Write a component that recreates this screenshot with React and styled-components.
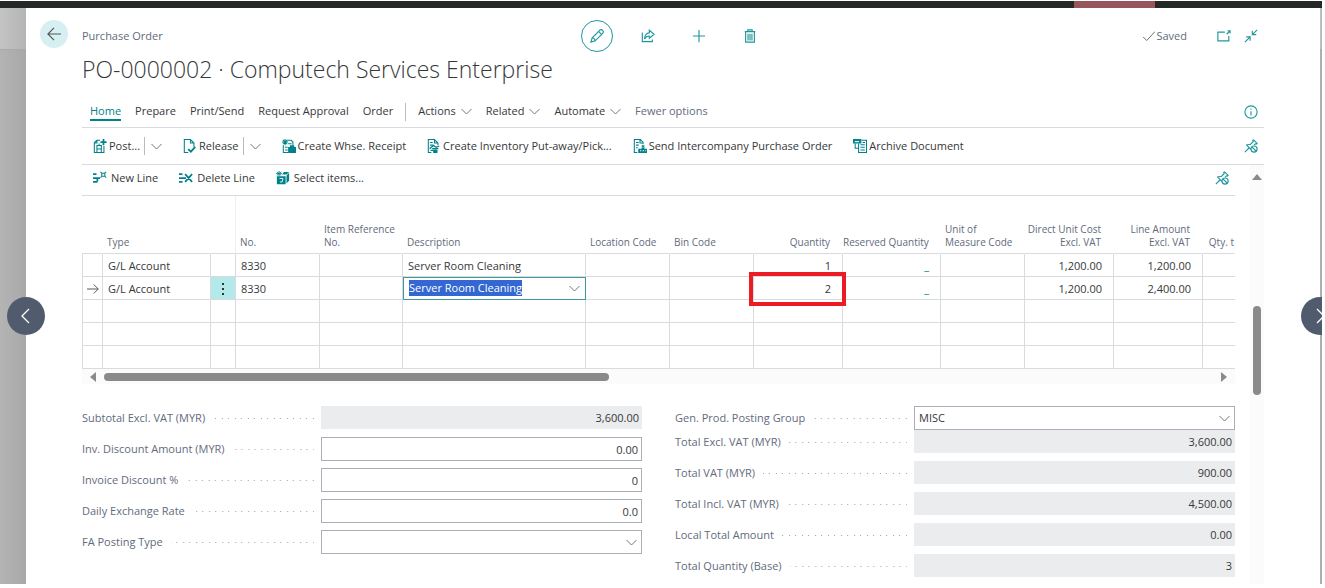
import React, { useEffect, useRef } from "react";
import styled, { createGlobalStyle } from "styled-components";

const teal = "#00828a";
const tealLight = "#1f979e";
const ink = "#363839";
const muted = "#626b7c";
const line = "#d9dbdf";

const GlobalStyle = createGlobalStyle`
  * {
    box-sizing: border-box;
  }
  body {
    margin: 0;
    background: #fff;
    color: ${ink};
    font-family: "Open Sans", "Noto Sans", sans-serif;
    font-size: 11px;
    line-height: 16px;
  }
  button, input, select {
    font: inherit;
    color: inherit;
  }
  button {
    padding: 0;
    border: 0;
    background: none;
    cursor: pointer;
  }
  svg {
    display: block;
    flex: none;
  }
`;

// 전체 화면
const Screen = styled.div`
  display: flex;
  flex-direction: column;
  height: 100vh;
  padding: 1px 3px 4px 0;
  overflow: hidden;
`;

const TopBar = styled.div`
  display: flex;
  justify-content: flex-end;
  flex: none;
  height: 7px;
  padding-right: 167px;
  background: #262827;
`;

const TopBadge = styled.div`
  width: 81px;
  background: #97565b;
`;

const Stage = styled.div`
  position: relative;
  display: flex;
  flex: 1;
  min-height: 0;
  overflow: hidden;
`;

const Gutter = styled.div`
  flex: none;
  width: ${({ $width }) => $width}px;
  padding-top: 41px;
  background: linear-gradient(90deg, #c4c4c4, #b4b4b4);
`;

const GutterShade = styled.div`
  height: 100%;
  border-top: 1px solid #a9a9a9;
  background: linear-gradient(90deg, #b4b4b4, #a8a8a8);
`;

const Panel = styled.main`
  display: grid;
  grid-template-columns: 56px minmax(0, 1fr) 56px;
  flex: 1;
  min-width: 0;
  background: #fff;
`;

const PanelSide = styled.div`
  padding: 12px 0 0 14px;
`;

const Content = styled.div`
  display: flex;
  flex-direction: column;
  min-height: 0;
`;

const BackButton = styled.button`
  display: grid;
  place-items: center;
  width: 28px;
  height: 28px;
  border-radius: 50%;
  background: #d6eff1;
`;

const PageArrow = styled.button`
  position: absolute;
  top: 289px;
  ${({ $side }) => $side}: ${({ $side }) => ($side === "left" ? 7 : -17)}px;
  display: grid;
  place-items: center;
  width: 38px;
  height: 38px;
  border-radius: 50%;
  background: #505c6d;
  color: #fff;
`;

// 제목 영역
const Header = styled.header`
  display: grid;
  grid-template-columns: 1fr auto 1fr;
  align-items: center;
  padding-top: 12px;
`;

const Caption = styled.span`
  color: ${muted};
`;

const HeaderActions = styled.div`
  display: flex;
  gap: 19px;
`;

const RoundButton = styled.button`
  display: grid;
  place-items: center;
  width: 32px;
  height: 32px;
  border: 1px solid ${({ $active }) => ($active ? tealLight : "transparent")};
  border-radius: 50%;
  color: ${tealLight};
`;

const HeaderStatus = styled.div`
  display: flex;
  justify-content: flex-end;
  align-items: center;
  gap: 13px;
  padding-right: 6px;
  color: ${tealLight};
`;

const Saved = styled.span`
  display: flex;
  align-items: center;
  gap: 1px;
  margin-right: 17px;
  color: ${muted};
`;

const Title = styled.h1`
  margin: 0;
  padding-top: 1px;
  font-size: 23px;
  font-weight: 300;
  line-height: 32px;
`;

// 메뉴 탭
const Tabs = styled.nav`
  display: flex;
  align-items: center;
  height: 43px;
  padding: 12px 6px 0 8px;
  border-bottom: 1px solid ${line};
`;

const TabGroup = styled.div`
  display: flex;
  gap: 14px;
`;

const Tab = styled.button`
  display: flex;
  align-items: center;
  gap: 5px;
  height: 18px;
  border-bottom: 2px solid ${({ $active }) => ($active ? teal : "transparent")};
  color: ${({ $active, $quiet }) => ($active ? teal : $quiet ? muted : ink)};
`;

const Divider = styled.span`
  width: 1px;
  height: 18px;
  margin: 0 ${({ $after }) => $after}px 0 ${({ $before }) => $before}px;
  background: #b9bcc1;
`;

const Spacer = styled.span`
  flex: 1;
`;

const IconButton = styled.button`
  color: ${tealLight};
`;

const Toolbar = styled.div`
  display: flex;
  align-items: center;
  gap: 21px;
  height: ${({ $height }) => $height}px;
  padding: 0 6px ${({ $lift }) => $lift || 0}px 11px;
  border-bottom: 1px solid ${line};
`;

const Split = styled.div`
  display: flex;
  align-items: center;
`;

const Command = styled.button`
  display: flex;
  align-items: center;
  gap: ${({ $gap }) => $gap || 2}px;
  white-space: nowrap;

  svg {
    color: ${teal};
  }
`;

const MoreButton = styled.button`
  color: #777;
`;

// 스크롤 영역
const Body = styled.div`
  display: grid;
  grid-template-columns: minmax(0, 1fr) 14px;
  column-gap: 15px;
  flex: 1;
  min-height: 0;
`;

const BodyMain = styled.div`
  min-width: 0;
`;

const ScrollColumn = styled.div`
  display: flex;
  flex-direction: column;
  align-items: center;
  padding-top: 9px;
  background: #fbfbfb;
`;

const ScrollThumb = styled.div`
  width: 8px;
  height: 89px;
  margin-top: 126px;
  border-radius: 4px;
  background: #8a8a8a;
`;

const ScrollRow = styled.div`
  display: flex;
  align-items: center;
  gap: 8px;
  height: 15px;
  padding: 0 8px;
  background: #fbfbfb;
`;

const ScrollTrack = styled.div`
  flex: 1;
`;

const RowThumb = styled.div`
  height: 8px;
  border-radius: 4px;
  background: #8a8a8a;
`;

const GridScroll = styled.div`
  overflow: hidden;
`;

const Lines = styled.table`
  width: 100%;
  table-layout: fixed;
  border-spacing: 0;
`;

const HeadCell = styled.th`
  height: 58px;
  padding: 0 ${({ $end, $last }) => ($last ? 0 : $end ? 12 : 4)}px 4px ${({ $end }) => ($end ? 0 : 4)}px;
  border-right: 1px solid ${({ $split }) => ($split ? "#eeeff1" : "transparent")};
  border-bottom: 1px solid ${line};
  color: ${muted};
  font-size: 10px;
  font-weight: 400;
  line-height: 13px;
  text-align: ${({ $end }) => ($end ? "right" : "left")};
  vertical-align: bottom;
  white-space: pre;
`;

const Cell = styled.td`
  position: relative;
  height: 23px;
  padding: 1px ${({ $end }) => ($end ? 11 : 0)}px 0 ${({ $end, $flush }) => ($end || $flush ? 0 : 5)}px;
  border-right: 1px solid ${line};
  border-bottom: 1px solid ${line};
  background: ${({ $marked }) => ($marked ? "#b2e9eb" : "none")};
  text-align: ${({ $end }) => ($end ? "right" : "left")};
  white-space: nowrap;

  &:first-child {
    border-left: 1px solid ${line};
  }
  &:last-child {
    border-right: 0;
  }
`;

const Reserved = styled.a`
  color: ${teal};
  text-decoration: none;
`;

const RowMark = styled.span`
  display: grid;
  place-items: center;
  color: #555;
`;

const RowMenu = styled.button`
  display: grid;
  place-items: center;
  width: 100%;
  color: #333;
`;

const Highlight = styled.span`
  position: absolute;
  inset: -5px -4px -7px -5px;
  z-index: 1;
  border: 4px solid #ed1c24;
  pointer-events: none;
`;

const Combo = styled.div`
  display: flex;
  align-items: center;
  height: 23px;
  margin: -2px -1px -1px 0;
  padding: 0 5px 0 5px;
  border: 1px solid #3c999c;
  background: #fff;

  input {
    flex: 1;
    min-width: 0;
    padding: 0;
    border: 0;
    outline: 0;
    background: none;
  }
  input::selection {
    background: #3367d1;
    color: #fff;
  }
`;

// 합계 영역
const Totals = styled.div`
  display: grid;
  grid-template-columns: 1fr 1fr;
  column-gap: 33px;
  padding-top: 22px;
`;

const Fields = styled.div`
  display: flex;
  flex-direction: column;
`;

const Field = styled.div`
  display: grid;
  grid-template-columns: 239px minmax(0, 1fr);
  align-items: center;
  margin-bottom: ${({ $tight }) => ($tight ? 0 : 7)}px;
`;

const Label = styled.label`
  display: flex;
  align-items: center;
  gap: 8px;
  padding-right: 7px;
  color: ${muted};
  white-space: nowrap;

  &::after {
    content: "";
    flex: 1;
    height: 1px;
    background: linear-gradient(
      90deg,
      transparent 5px,
      #9da1a8 5px,
      #9da1a8 6px,
      transparent 6px,
      transparent 12px,
      #9da1a8 12px
    ) right top / 13px 1px;
  }
`;

const Value = styled.input`
  width: 100%;
  height: 24px;
  padding: 0 3px;
  border: 1px solid ${({ readOnly }) => (readOnly ? "#fff" : "#a9aeb8")};
  border-width: ${({ readOnly }) => (readOnly ? "0 0 1px" : "1px")};
  outline: 0;
  background: ${({ readOnly }) => (readOnly ? "#ebecee" : "#fff")};
  text-align: right;
`;

const SelectBox = styled.div`
  display: grid;
  align-items: center;

  select,
  svg {
    grid-area: 1 / 1;
  }
  select {
    width: 100%;
    height: 24px;
    padding: 0 4px;
    border: 1px solid #a9aeb8;
    border-radius: 0;
    outline: 0;
    background: #fff;
    appearance: none;
  }
  svg {
    justify-self: end;
    margin-right: 5px;
    color: #777;
    pointer-events: none;
  }
`;

const Svg = ({ size = 16, width = 1, children }) => (
  <svg
    width={size}
    height={size}
    viewBox="0 0 16 16"
    fill="none"
    stroke="currentColor"
    strokeWidth={width}
    aria-hidden="true"
  >
    {children}
  </svg>
);

const Chevron = () => (
  <svg width="11" height="11" viewBox="0 0 11 11" fill="none" stroke="#777" aria-hidden="true">
    <path d="M.5 3l5 5 5-5" />
  </svg>
);

const PinIcon = () => (
  <Svg size={14} width={1.3}>
    <path d="M1 15l5-5M2.500 6.500l4 4M3 7c2-1 3-.5 4.500-1l3-3-.5-1.500L11 1l4 4-1 .8-1-.3-1.500 1.500M6.500 10.500L8 12" />
    <circle cx="11.500" cy="11.500" r="3.500" />
    <path d="M9 9l5 5" />
  </Svg>
);

const PostIcon = () => (
  <Svg size={14} width={1.2}>
    <path d="M8 1.500H4.500L1.500 4v11.400h11V8M1.500 4.500h3v-3M4.500 15V7.500h5V15M4.500 11.500h5M7 5v2.500" />
    <path d="M12 0v7M8.500 3.500h7" strokeWidth="2" />
  </Svg>
);

const ReleaseIcon = () => (
  <Svg size={14} width={1.2}>
    <path d="M6 15.400H1.500V.6h7l4 4V9M8.500.6v4h4" />
    <path d="M6 11.500l3 3L14 9" strokeWidth="2" />
  </Svg>
);

const WarehouseIcon = () => (
  <Svg size={14} width={1.2}>
    <path d="M1.500 7v8.400H7M6 1.500h4.500l2 2V7M3.500 9.500h3M3.500 12.500h3M7 5.500h4" />
    <path d="M3.500 0v7M0 3.500h7M1 1l5 5M6 1L1 6" />
    <path d="M7 9h9v7H7zM9 7h5v2H9z" fill="currentColor" stroke="none" />
  </Svg>
);

const InventoryIcon = () => (
  <Svg size={14} width={1.2}>
    <path d="M5 15.400H1.500V.6h7l4 4V7M8.500.6v4h4M3.500 4h3M3.500 7h4" />
    <path d="M3 11l4.500-3.500 3 2L14 8M6 11h7M4 13h3" strokeWidth="1.500" />
    <path d="M7 12h5v4H7z" fill="currentColor" stroke="none" />
  </Svg>
);

const SendIcon = () => (
  <Svg size={14} width={1.2}>
    <path d="M5 15.400H1.500V.6h7l3 3V6M8 .6v4h4M3.500 4h3M3.500 7h3M3.500 10h2" />
    <path d="M6 16v-5h4V7h3v4h3v5z" fill="currentColor" stroke="none" />
    <path d="M8 13.500h1.500M11 13.500h1.500M14 13.500h1M11 9.500h1" stroke="#fff" />
  </Svg>
);

const ArchiveIcon = () => (
  <Svg size={14} width={1.2}>
    <path d="M0 .5h9v4H0z" fill="currentColor" />
    <path d="M2 3h5" stroke="#fff" />
    <path d="M2.500 5v5.500H6M10 1.500h5.400v14h-9V5M8.500 6.500h5M8.500 9.500h5M8.500 12.500h5M11 4h3" />
  </Svg>
);

const NewLineIcon = () => (
  <Svg size={14}>
    <path d="M0 3.500h4M0 8h8M0 12.500h5M5 8v4" strokeWidth="2" />
    <path d="M10 2.500h3.500v3.500H10zM8.500 1L10 2.500M15 1l-1.500 1.500M8.500 7.500L10 6M15 7.500L13.500 6" strokeWidth="1.200" />
  </Svg>
);

const DeleteLineIcon = () => (
  <Svg size={14}>
    <path d="M0 3.500h4M0 8h8M0 12.500h4M7 3.500l8 9M15 3.500l-8 9" strokeWidth="2" />
  </Svg>
);

const SelectItemsIcon = () => (
  <Svg size={14}>
    <path d="M1 6h10v9H1zM12 5l3-3v9l-3 3zM7 4l2-3h6l-3 3z" fill="currentColor" stroke="none" />
    <path d="M3.500 0v6M0 3h7M1 1l5 4M6 1L1 5" />
    <path d="M4 8.500h4l-1 4H4.500" stroke="#fff" />
  </Svg>
);

const tabs = ["Home", "Prepare", "Print/Send", "Request Approval", "Order"];
const menus = ["Actions", "Related", "Automate"];

const columns = [
  { width: 21, label: "" },
  { width: 108, label: "Type" },
  { width: 25, label: "", split: true },
  { width: 84, label: "No." },
  { width: 83, label: "Item Reference\nNo." },
  { width: 183, label: "Description" },
  { width: 84, label: "Location Code" },
  { width: 84, label: "Bin Code" },
  { width: 89, label: "Quantity", end: true },
  { width: 98, label: "Reserved Quantity", end: true },
  { width: 84, label: "Unit of\nMeasure Code" },
  { width: 89, label: "Direct Unit Cost\nExcl. VAT", end: true },
  { width: 89, label: "Line Amount\nExcl. VAT", end: true },
  { label: "Qty. t", end: true, last: true },
];

const rows = [
  { quantity: "1", cost: "1,200.00", amount: "1,200.00" },
  { quantity: "2", cost: "1,200.00", amount: "2,400.00", current: true },
];

// 가로 스크롤에서 보이는 비율
const visibleShare = 0.455;

const leftFields = [
  { id: "subtotal", label: "Subtotal Excl. VAT (MYR)", value: "3,600.00", readOnly: true },
  { id: "invDiscount", label: "Inv. Discount Amount (MYR)", value: "0.00" },
  { id: "discountPct", label: "Invoice Discount %", value: "0" },
  { id: "exchangeRate", label: "Daily Exchange Rate", value: "0.0" },
  { id: "faPosting", label: "FA Posting Type", options: [""] },
];

const rightFields = [
  { id: "genProd", label: "Gen. Prod. Posting Group", options: ["MISC"], tight: true },
  { id: "totalExcl", label: "Total Excl. VAT (MYR)", value: "3,600.00", readOnly: true },
  { id: "totalVat", label: "Total VAT (MYR)", value: "900.00", readOnly: true },
  { id: "totalIncl", label: "Total Incl. VAT (MYR)", value: "4,500.00", readOnly: true },
  { id: "localTotal", label: "Local Total Amount", value: "0.00", readOnly: true },
  { id: "totalQty", label: "Total Quantity (Base)", value: "3", readOnly: true },
];

function FieldRow({ field }) {
  return (
    <Field $tight={field.tight}>
      <Label htmlFor={field.id}>{field.label}</Label>
      {field.options ? (
        <SelectBox>
          <select id={field.id}>
            {field.options.map((option) => (
              <option key={option}>{option}</option>
            ))}
          </select>
          <Chevron />
        </SelectBox>
      ) : (
        <Value id={field.id} defaultValue={field.value} readOnly={field.readOnly} />
      )}
    </Field>
  );
}

function DescriptionEditor() {
  const input = useRef(null);

  useEffect(() => {
    input.current.focus();
    input.current.select();
  }, []);

  return (
    <Combo>
      <input ref={input} aria-label="Description" defaultValue="Server Room Cleaning" />
      <MoreButton aria-label="Choose description">
        <Chevron />
      </MoreButton>
    </Combo>
  );
}

function LineRow({ row }) {
  return (
    <tr>
      <Cell $flush>
        {row.current && (
          <RowMark>
            <Svg size={12} width={1.3}>
              <path d="M0 8h15M9 2l6 6-6 6" />
            </Svg>
          </RowMark>
        )}
      </Cell>
      <Cell>G/L Account</Cell>
      <Cell $flush $marked={row.current}>
        {row.current && (
          <RowMenu aria-label="Show more options">
            <svg width="2" height="12" viewBox="0 0 2 12" fill="currentColor">
              <path d="M0 0h2v2H0zM0 5h2v2H0zM0 10h2v2H0z" />
            </svg>
          </RowMenu>
        )}
      </Cell>
      <Cell>8330</Cell>
      <Cell />
      <Cell $flush={row.current}>{row.current ? <DescriptionEditor /> : "Server Room Cleaning"}</Cell>
      <Cell />
      <Cell />
      <Cell $end>
        {row.quantity}
        {row.current && <Highlight />}
      </Cell>
      <Cell $end>
        <Reserved href="#reserved">_</Reserved>
      </Cell>
      <Cell />
      <Cell $end>{row.cost}</Cell>
      <Cell $end>{row.amount}</Cell>
      <Cell />
    </tr>
  );
}

function App() {
  return (
    <Screen>
      <GlobalStyle />
      <TopBar>
        <TopBadge />
      </TopBar>
      <Stage>
        <Gutter $width={26}>
          <GutterShade />
        </Gutter>
        <Panel>
          <PanelSide>
            <BackButton aria-label="Back">
              <Svg size={14} width={1.3}>
                <path d="M16 8H1M8 1L1 8l7 7" stroke="#555" />
              </Svg>
            </BackButton>
          </PanelSide>
          <Content>
            <Header>
              <Caption>Purchase Order</Caption>
              <HeaderActions>
                <RoundButton $active aria-label="Edit">
                  <Svg size={14} width={1.3}>
                    <path d="M1 15l1.500-5L11 1.500q2-1.500 3.500 0t0 3.500L6 13.500zM10 3l3.500 3.500M2.500 10q3 .5 3.500 3.500" />
                  </Svg>
                </RoundButton>
                <RoundButton aria-label="Share">
                  <Svg size={14} width={1.3}>
                    <path d="M1.500 4v10.500H13V12M9.500 1.500l5.500 4.500-5.500 4.500V8Q6 8 4 11.500 4.500 5 9.500 4.500z" />
                  </Svg>
                </RoundButton>
                <RoundButton aria-label="New">
                  <Svg size={14} width={1.3}>
                    <path d="M8 1v14M1 8h14" />
                  </Svg>
                </RoundButton>
                <RoundButton aria-label="Delete">
                  <Svg size={14} width={1.3}>
                    <path d="M2 3h12M5.500 3V1h5v2M3 3v12h10V3M5.800 5.500v7.500M8 5.500v7.500M10.200 5.500v7.500" />
                  </Svg>
                </RoundButton>
              </HeaderActions>
              <HeaderStatus>
                <Saved>
                  <Svg size={12} width={1.3}>
                    <path d="M0 9l5 5L16 2" />
                  </Svg>
                  Saved
                </Saved>
                <IconButton aria-label="Open in new window">
                  <Svg size={14} width={1.3}>
                    <path d="M9 3.500H1v10h12.500V8M11 6l4-4M12 2h3v3" />
                  </Svg>
                </IconButton>
                <IconButton aria-label="Collapse">
                  <Svg size={14} width={1.3}>
                    <path d="M1 15l6-6M2.500 9H7v4.500M15 1L9.500 6.500M9.500 2v4.500H14" />
                  </Svg>
                </IconButton>
              </HeaderStatus>
            </Header>
            <Title>PO-0000002 · Computech Services Enterprise</Title>
            <Tabs>
              <TabGroup>
                {tabs.map((tab) => (
                  <Tab key={tab} $active={tab === "Home"}>
                    {tab}
                  </Tab>
                ))}
              </TabGroup>
              <Divider $before={12} $after={12} />
              <TabGroup>
                {menus.map((menu) => (
                  <Tab key={menu}>
                    {menu}
                    <Chevron />
                  </Tab>
                ))}
                <Tab $quiet>Fewer options</Tab>
              </TabGroup>
              <Spacer />
              <IconButton aria-label="Information">
                <Svg size={14} width={1.3}>
                  <circle cx="8" cy="8" r="7" />
                  <path d="M8 7v5M8 4v1.500" />
                </Svg>
              </IconButton>
            </Tabs>
            <Toolbar $height={37}>
              <Split>
                <Command><PostIcon />Post...</Command>
                <Divider $before={4} $after={6} />
                <MoreButton aria-label="More posting options"><Chevron /></MoreButton>
              </Split>
              <Split>
                <Command><ReleaseIcon />Release</Command>
                <Divider $before={4} $after={6} />
                <MoreButton aria-label="More release options"><Chevron /></MoreButton>
              </Split>
              <Command><WarehouseIcon />Create Whse. Receipt</Command>
              <Command><InventoryIcon />Create Inventory Put-away/Pick...</Command>
              <Command><SendIcon />Send Intercompany Purchase Order</Command>
              <Command><ArchiveIcon />Archive Document</Command>
              <Spacer />
              <IconButton aria-label="Unpin actions"><PinIcon /></IconButton>
            </Toolbar>
            <Body>
              <BodyMain>
                <Toolbar $height={31} $lift={4}>
                  <Command $gap={4}><NewLineIcon />New Line</Command>
                  <Command $gap={4}><DeleteLineIcon />Delete Line</Command>
                  <Command $gap={4}><SelectItemsIcon />Select items...</Command>
                  <Spacer />
                  <IconButton aria-label="Unpin line actions"><PinIcon /></IconButton>
                </Toolbar>
                <GridScroll>
                  <Lines>
                    <colgroup>
                      {columns.map((column, i) => (
                        <col key={i} width={column.width} />
                      ))}
                    </colgroup>
                    <thead>
                      <tr>
                        {columns.map((column, i) => (
                          <HeadCell key={i} $end={column.end} $split={column.split} $last={column.last}>
                            {column.label}
                          </HeadCell>
                        ))}
                      </tr>
                    </thead>
                    <tbody>
                      {rows.map((row) => (
                        <LineRow key={row.quantity} row={row} />
                      ))}
                      {[0, 1, 2].map((n) => (
                        <tr key={n}>
                          {columns.map((column, i) => (
                            <Cell key={i} />
                          ))}
                        </tr>
                      ))}
                    </tbody>
                  </Lines>
                </GridScroll>
                <ScrollRow>
                  <svg width="6" height="10" viewBox="0 0 6 10" fill="#8a8a8a"><path d="M6 0v10L0 5z" /></svg>
                  <ScrollTrack>
                    <RowThumb style={{ width: `${visibleShare * 100}%` }} />
                  </ScrollTrack>
                  <svg width="6" height="10" viewBox="0 0 6 10" fill="#8a8a8a"><path d="M0 0v10l6-5z" /></svg>
                </ScrollRow>
                <Totals>
                  <Fields>
                    {leftFields.map((field) => (
                      <FieldRow key={field.id} field={field} />
                    ))}
                  </Fields>
                  <Fields>
                    {rightFields.map((field) => (
                      <FieldRow key={field.id} field={field} />
                    ))}
                  </Fields>
                </Totals>
              </BodyMain>
              <ScrollColumn>
                <svg width="10" height="6" viewBox="0 0 10 6" fill="#8a8a8a"><path d="M0 6h10L5 0z" /></svg>
                <ScrollThumb />
              </ScrollColumn>
            </Body>
          </Content>
        </Panel>
        <Gutter $width={2}>
          <GutterShade />
        </Gutter>
        <PageArrow $side="left" aria-label="Previous record">
          <Svg size={16} width={1.3}>
            <path d="M11 1L4 8l7 7" />
          </Svg>
        </PageArrow>
        <PageArrow $side="right" aria-label="Next record">
          <Svg size={16} width={1.3}>
            <path d="M5 1l7 7-7 7" />
          </Svg>
        </PageArrow>
      </Stage>
    </Screen>
  );
}

export default App;
